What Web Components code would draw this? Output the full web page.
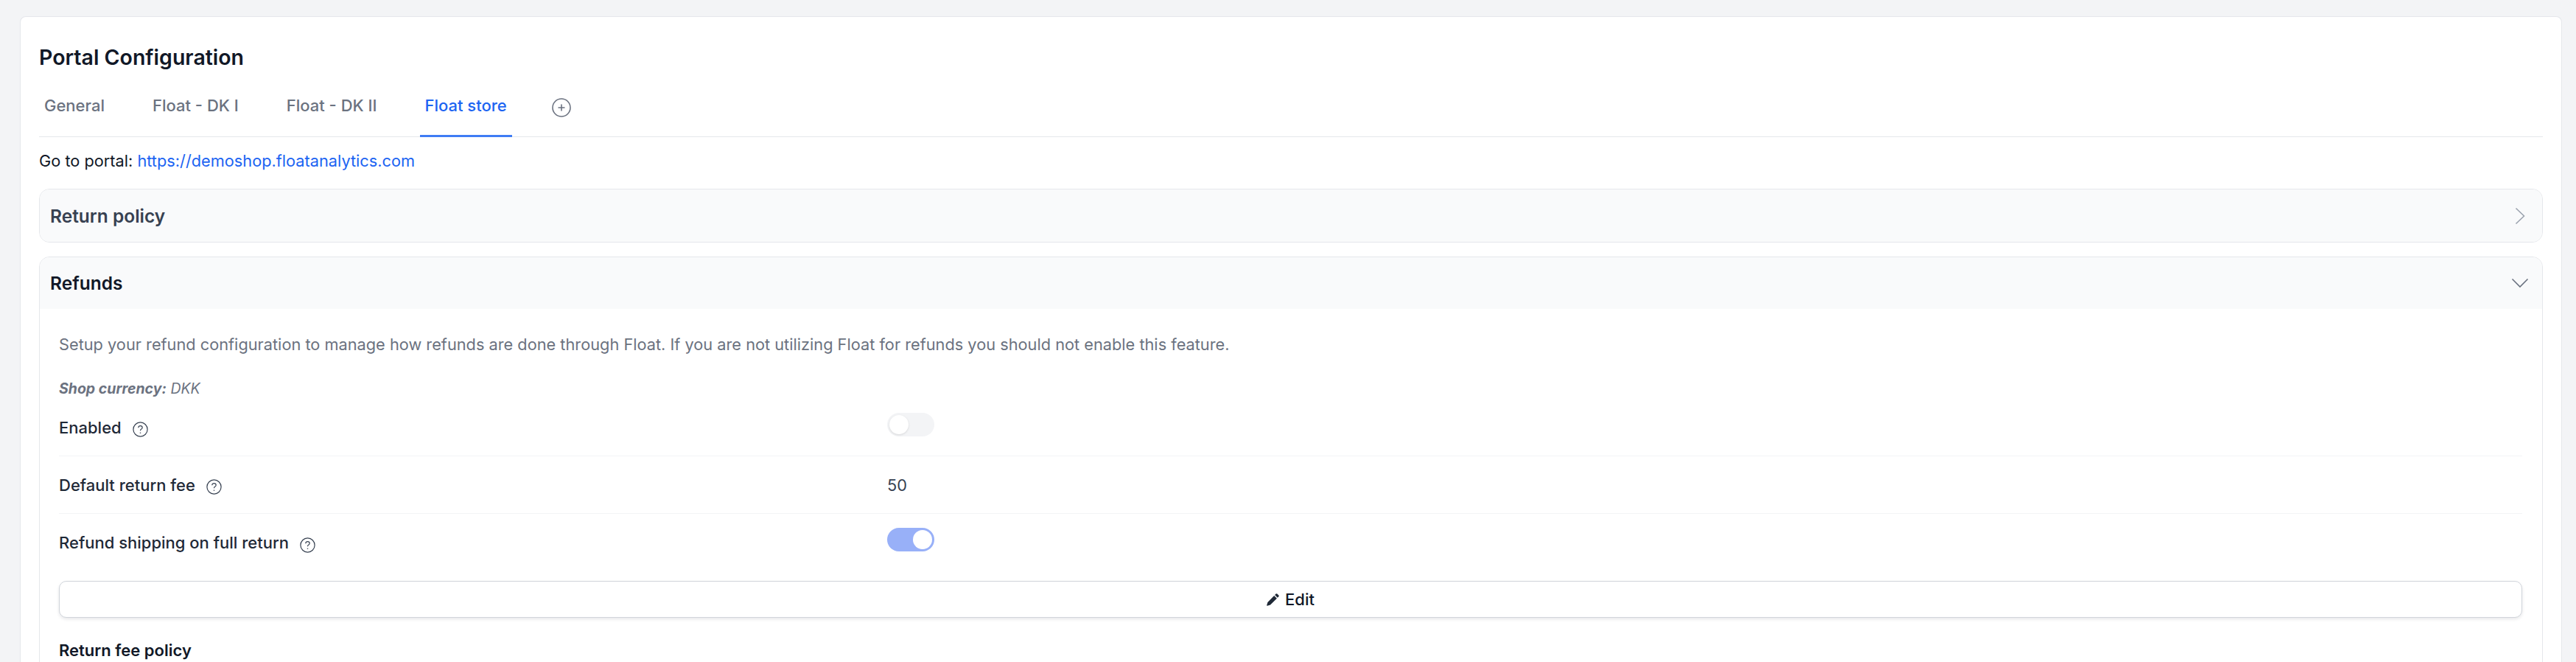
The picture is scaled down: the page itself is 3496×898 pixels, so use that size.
<!DOCTYPE html>
<html>
<head>
<meta charset="utf-8">
<title>Portal Configuration</title>
<style>
  html, body { margin: 0; height: 898px; overflow: hidden; background: #f3f4f6; }
  body { padding: 22px 19px 0 27px; box-sizing: border-box; font-family: Inter, "Liberation Sans", sans-serif; color: #111827; }
</style>
</head>
<body>
<portal-card heading="Portal Configuration">
  <tab-bar>
    <tab-item>General</tab-item>
    <tab-item>Float - DK I</tab-item>
    <tab-item>Float - DK II</tab-item>
    <tab-item active>Float store</tab-item>
  </tab-bar>
  <portal-link href="https://demoshop.floatanalytics.com"></portal-link>
  <accordion-panel heading="Return policy"></accordion-panel>
  <accordion-panel heading="Refunds" open>
    <refund-settings></refund-settings>
  </accordion-panel>
</portal-card>

<script>
class PortalCard extends HTMLElement {
  constructor() {
    super();
    this.attachShadow({ mode: "open" }).innerHTML = `
    <style>
      :host { display: block; height: 876px; box-sizing: border-box; background: #fff; border: 1px solid #e5e7eb; border-bottom: 0; border-radius: 8px 8px 0 0; padding: 37px 25px 0; overflow: hidden; }
      h1 { margin: 0; font-size: 28.5px; line-height: 36px; font-weight: 600; color: #111827; }
    </style>
    <h1>${this.getAttribute("heading")}</h1>
    <slot></slot>`;
  }
}
customElements.define("portal-card", PortalCard);

class TabBar extends HTMLElement {
  constructor() {
    super();
    this.attachShadow({ mode: "open" }).innerHTML = `
    <style>
      :host { display: flex; gap: 51px; height: 79px; margin-top: 10px; border-bottom: 1px solid #e5e7eb; }
      button { all: unset; display: block; margin: 27px 0 0 3px; width: 26px; height: 26px; }
      svg { display: block; }
    </style>
    <slot></slot>
    <button>
      <svg width="26" height="26" viewBox="0 0 26 26" fill="none" stroke="#6b7280">
        <circle cx="13" cy="13" r="12" stroke-width="1.6"/>
        <path d="M13 8.5v9M8.5 13h9" stroke-width="1.6"/>
      </svg>
    </button>`;
  }
}
customElements.define("tab-bar", TabBar);

class TabItem extends HTMLElement {
  constructor() {
    super();
    this.attachShadow({ mode: "open" }).innerHTML = `
    <style>
      :host { display: block; height: 80px; box-sizing: border-box; padding: 22px 7px 0; font-size: 22px; line-height: 30px; font-weight: 500; color: #6b7280; border-bottom: 3px solid transparent; }
      :host([active]) { color: #1c64f2; border-bottom-color: #3f7cf4; }
    </style>
    <slot></slot>`;
  }
}
customElements.define("tab-item", TabItem);

class PortalLink extends HTMLElement {
  constructor() {
    super();
    const href = this.getAttribute("href");
    this.attachShadow({ mode: "open" }).innerHTML = `
    <style>
      :host { display: block; margin-top: 17px; font-size: 21.75px; line-height: 30px; color: #111827; }
      a { color: #1c64f2; text-decoration: none; }
    </style>
    Go to portal: <a href="${href}">${href}</a>`;
  }
}
customElements.define("portal-link", PortalLink);

class AccordionPanel extends HTMLElement {
  constructor() {
    super();
    const open = this.hasAttribute("open");
    const chevron = open
      ? `<svg width="24" height="14" viewBox="0 0 24 14" fill="none" stroke="#6b7280" stroke-width="1.6"><path d="M1.5 1.5L12 12L22.5 1.5"/></svg>`
      : `<svg width="14" height="24" viewBox="0 0 14 24" fill="none" stroke="#9ca3af" stroke-width="1.6"><path d="M1.5 1.5L12.5 12L1.5 22.5"/></svg>`;
    this.attachShadow({ mode: "open" }).innerHTML = `
    <style>
      :host { display: block; margin-top: 23px; background: #fff; border: 1px solid #e5e7eb; border-radius: 14px; overflow: hidden; }
      :host([open]) { margin-top: 19px; }
      header { display: flex; align-items: center; justify-content: space-between; height: 71px; padding: 0 23px 0 14px; background: #f9fafb; font-size: 24.5px; font-weight: 600; color: #374151; }
      :host([open]) header { height: 70px; padding-right: 18px; color: #111827; }
      svg { display: block; }
    </style>
    <header><span>${this.getAttribute("heading")}</span>${chevron}</header>
    <slot></slot>`;
  }
}
customElements.define("accordion-panel", AccordionPanel);

class HelpIcon extends HTMLElement {
  constructor() {
    super();
    this.attachShadow({ mode: "open" }).innerHTML = `
    <style>
      :host { display: block; width: 21px; height: 21px; margin: 6px 0 0 15px; }
      svg { display: block; }
    </style>
    <svg width="21" height="21" viewBox="0 0 21 21" fill="none" stroke="#374151" stroke-width="1.2">
      <circle cx="10.5" cy="10.5" r="9.6"/>
      <path d="M7.8 8.2c0-1.6 1.2-2.6 2.7-2.6s2.7 1 2.7 2.4c0 1.2-.8 1.8-1.6 2.3-.8.5-1.1 1-1.1 1.9"/>
      <path d="M10.500 14.6v1.2" stroke-width="1.4"/>
    </svg>`;
  }
}
customElements.define("help-icon", HelpIcon);

class ToggleSwitch extends HTMLElement {
  constructor() {
    super();
    this.attachShadow({ mode: "open" }).innerHTML = `
    <style>
      :host { display: flex; width: 64px; height: 32px; box-sizing: border-box; padding: 3px; border-radius: 16px; background: #f3f4f6; margin-bottom: 8px; }
      :host([on]) { background: #98b0f8; justify-content: flex-end; }
      i { display: block; width: 26px; height: 26px; border-radius: 50%; background: #fff; box-shadow: 0 1px 3px rgba(0,0,0,.12); }
      :host([on]) i { box-shadow: none; }
    </style>
    <i></i>`;
  }
}
customElements.define("toggle-switch", ToggleSwitch);

class SettingRow extends HTMLElement {
  constructor() {
    super();
    this.attachShadow({ mode: "open" }).innerHTML = `
    <style>
      :host { display: grid; grid-template-columns: 1124px 1fr; align-items: center; height: 78px; box-sizing: border-box; border-bottom: 1px solid #f3f4f6; }
      :host([last]) { border-bottom: 0; margin-bottom: 13px; }
      .label { display: flex; align-items: center; font-size: 22px; font-weight: 500; color: #1f2937; }
      .value { display: flex; font-size: 21.75px; color: #374151; }
    </style>
    <div class="label">${this.getAttribute("label")}<help-icon></help-icon></div>
    <div class="value"><slot></slot></div>`;
  }
}
customElements.define("setting-row", SettingRow);

class EditButton extends HTMLElement {
  constructor() {
    super();
    this.attachShadow({ mode: "open" }).innerHTML = `
    <style>
      :host { display: flex; align-items: center; justify-content: center; gap: 8px; height: 50px; box-sizing: border-box; border: 1.5px solid #d1d5db; border-radius: 10px; background: #fff; box-shadow: 0 2px 4px rgba(17,24,39,.1); font-size: 22px; font-weight: 500; color: #111827; }
      svg { display: block; }
    </style>
    <svg width="17" height="17" viewBox="0 0 17 17" fill="#1f2937">
      <path d="M12.6.6a1.2 1.2 0 0 1 1.7 0l2 2a1.2 1.2 0 0 1 0 1.7l-1.5 1.5-3.7-3.7zM10.2 3l3.7 3.7L5 15.6.9 16.8a.6.6 0 0 1-.7-.7L1.400 12z"/>
    </svg>
    <slot></slot>`;
  }
}
customElements.define("edit-button", EditButton);

class RefundSettings extends HTMLElement {
  constructor() {
    super();
    this.attachShadow({ mode: "open" }).innerHTML = `
    <style>
      :host { display: block; padding: 33px 27px 60px 26px; }
      .intro { font-size: 21.75px; line-height: 30px; color: #6b7280; }
      .currency { margin: 32px 0 1px; font-size: 19.5px; line-height: 26px; font-style: italic; color: #6b7280; }
      .currency b { font-weight: 700; }
      h3 { margin: 29px 0 0; font-size: 22px; line-height: 30px; font-weight: 600; color: #111827; }
    </style>
    <div class="intro">Setup your refund configuration to manage how refunds are done through Float. If you are not utilizing Float for refunds you should not enable this feature.</div>
    <div class="currency"><b>Shop currency:</b> DKK</div>
    <setting-row label="Enabled"><toggle-switch></toggle-switch></setting-row>
    <setting-row label="Default return fee">50</setting-row>
    <setting-row label="Refund shipping on full return" last><toggle-switch on></toggle-switch></setting-row>
    <edit-button>Edit</edit-button>
    <h3>Return fee policy</h3>`;
  }
}
customElements.define("refund-settings", RefundSettings);
</script>
</body>
</html>
